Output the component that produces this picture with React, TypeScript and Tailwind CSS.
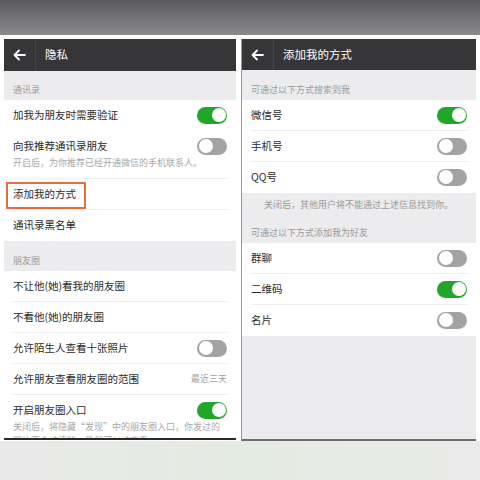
import React from "react";

const FONT = { fontFamily: '"Noto Sans CJK SC", "Noto Sans", sans-serif' };

function Toggle({ on }: { on: boolean }) {
  return (
    <div
      className={
        "relative h-[17px] w-[30px] rounded-full " +
        (on ? "bg-[#22a629]" : "bg-[#a3a3a3]")
      }
    >
      <div
        className={
          "absolute top-[1.5px] h-[14px] w-[14px] rounded-full bg-white " +
          (on ? "right-[1.5px]" : "left-[1.5px]")
        }
      />
    </div>
  );
}

function Header({ title, h = 32 }: { title: string; h?: number }) {
  return (
    <div className="flex shrink-0 items-center bg-[#363638]" style={{ height: h }}>
      <div className="flex h-full w-[32px] items-center justify-center border-r border-[#444447]">
        <svg width="13" height="12" viewBox="0 0 13 12" fill="none" stroke="white" strokeWidth="1.8" strokeLinecap="round" strokeLinejoin="round">
          <path d="M12 6H1.5M6 1.5L1.5 6L6 10.5" />
        </svg>
      </div>
      <span className="ml-[9px] text-[11.5px] text-white">{title}</span>
    </div>
  );
}

function Section({ label, h = 29 }: { label: string; h?: number }) {
  return (
    <div
      className="flex shrink-0 items-end bg-[#ececee] px-[9px] pb-[4px] text-[9px] text-[#9b9b9b]"
      style={{ height: h }}
    >
      {label}
    </div>
  );
}

function Row({
  label,
  toggle,
  value,
  divider = true,
  sub,
}: {
  label: string;
  toggle?: boolean;
  value?: string;
  divider?: boolean;
  sub?: string;
}) {
  return (
    <div className="shrink-0 bg-white px-[9px]">
      <div className={"flex flex-col border-b " + (divider ? "border-[#ececec]" : "border-transparent")}>
        <div className="flex h-[30px] items-center justify-between">
          <span className="text-[10.5px] text-[#2b2b2b]">{label}</span>
          {toggle !== undefined && <Toggle on={toggle} />}
          {value && <span className="text-[9px] text-[#a0a0a0]">{value}</span>}
        </div>
        {sub && (
          <div className="-mt-[5px] pb-[8px] text-[9px] leading-[14px] text-[#a8a8a8]">{sub}</div>
        )}
      </div>
    </div>
  );
}

export default function App() {
  return (
    <div className="flex h-[480px] w-[480px] flex-col overflow-hidden bg-white" style={FONT}>
      <div className="h-[35px] shrink-0 bg-gradient-to-b from-[#5c5c5e] to-[#8a8a8c]" />
      <div className="h-[4px] shrink-0 bg-white" />
      <div className="flex h-[402px] shrink-0 gap-[5px] px-[4px]">
        {/* Left: 隐私 */}
        <div className="relative flex h-[401px] w-[232px] flex-col overflow-hidden border-b-2 border-[#2a2a2a] bg-[#ececee]">
          <Header title="隐私" />
          <Section label="通讯录" />
          <Row label="加我为朋友时需要验证" toggle={true} divider={false} />
          <Row label="向我推荐通讯录朋友" toggle={false} sub="开启后，为你推荐已经开通微信的手机联系人。" />
          <Row label="添加我的方式" />
          <Row label="通讯录黑名单" divider={false} />
          <Section label="朋友圈" h={30} />
          <Row label="不让他(她)看我的朋友圈" />
          <Row label="不看他(她)的朋友圈" />
          <Row label="允许陌生人查看十张照片" toggle={false} />
          <Row label="允许朋友查看朋友圈的范围" value="最近三天" />
          <Row
            label="开启朋友圈入口"
            toggle={true}
            divider={false}
            sub="关闭后，将隐藏“发现”中的朋友圈入口，你发过的照片不会被清除，仍然可以被查看。"
          />
          <div className="pointer-events-none absolute left-[2px] top-[143px] h-[27px] w-[80px] border-2 border-[#e2703f]" />
        </div>
        {/* Right: 添加我的方式 */}
        <div className="flex h-[402px] w-[235px] flex-col overflow-hidden border-b-2 border-l border-[#6e6e6e] border-l-[#9a9a9a] bg-[#ececee]">
          <Header title="添加我的方式" h={31} />
          <Section label="可通过以下方式搜索到我" h={30} />
          <Row label="微信号" toggle={true} />
          <Row label="手机号" toggle={false} />
          <Row label="QQ号" toggle={false} divider={false} />
          <div className="flex h-[50px] shrink-0 flex-col justify-between bg-[#ececee] px-[9px] pb-[4px] pt-[5px] text-[9px] text-[#9b9b9b]">
            <span className="pl-[13px]">关闭后，其他用户将不能通过上述信息找到你。</span>
            <span>可通过以下方式添加我为好友</span>
          </div>
          <Row label="群聊" toggle={false} />
          <Row label="二维码" toggle={true} />
          <Row label="名片" toggle={false} divider={false} />
        </div>
      </div>
      <div className="flex-1 bg-gradient-to-r from-[#e9e9e9] via-[#e4ebe2] to-[#eaeaea]" />
    </div>
  );
}
